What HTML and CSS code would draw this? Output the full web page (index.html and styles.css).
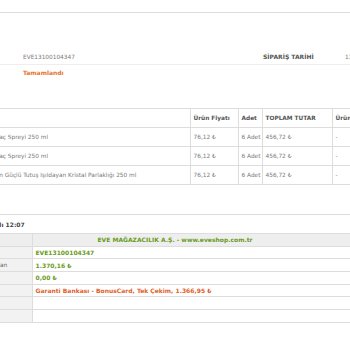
FILE: index.html
```html
<!DOCTYPE html>
<html lang="tr">
<head>
<meta charset="utf-8">
<title>Sipariş Detayı</title>
<link rel="stylesheet" href="styles.css">
</head>
<body>
<div class="page">
  <div class="topbar"></div>

  <div class="info">
    <div class="info-row first">
      <span class="ordno">EVE13100104347</span>
      <span class="info-label">SİPARİŞ TARİHİ</span>
      <span class="info-value">13.10.2013 12:07</span>
    </div>
    <div class="info-row">
      <span class="status">Tamamlandı</span>
    </div>
  </div>

  <table class="items">
    <colgroup>
      <col class="w-name">
      <col class="w-price">
      <col class="w-qty">
      <col class="w-total">
      <col class="w-disc">
    </colgroup>
    <thead>
      <tr>
        <th class="c-name">Ürün Adı</th>
        <th>Ürün Fiyatı</th>
        <th>Adet</th>
        <th>TOPLAM TUTAR</th>
        <th>Ürün İndirimi</th>
      </tr>
    </thead>
    <tbody>
      <tr>
        <td class="c-name">Elnett Satin Saç Spreyi 250 ml</td>
        <td>76,12 ₺</td>
        <td>6 Adet</td>
        <td>456,72 ₺</td>
        <td>-</td>
      </tr>
      <tr>
        <td class="c-name">Elnett Satin Saç Spreyi 250 ml</td>
        <td>76,12 ₺</td>
        <td>6 Adet</td>
        <td>456,72 ₺</td>
        <td>-</td>
      </tr>
      <tr>
        <td class="c-name">Elnett Satin En Güçlü Tutuş Işıldayan Kristal Parlaklığı 250 ml</td>
        <td>76,12 ₺</td>
        <td>6 Adet</td>
        <td>456,72 ₺</td>
        <td>-</td>
      </tr>
    </tbody>
  </table>

  <div class="date"><span class="date-text">Salı 12:07</span></div>

  <table class="summary">
    <colgroup>
      <col class="w-lbl">
      <col class="w-val">
    </colgroup>
    <tr class="head">
      <td class="lbl"></td>
      <td class="head-val">EVE MAĞAZACILIK A.Ş. - www.eveshop.com.tr</td>
    </tr>
    <tr>
      <td class="lbl">Sipariş</td>
      <td class="green">EVE13100104347</td>
    </tr>
    <tr>
      <td class="lbl">Toplam Tutan</td>
      <td class="green">1.370,16 ₺</td>
    </tr>
    <tr>
      <td class="lbl">İndirim</td>
      <td class="green">0,00 ₺</td>
    </tr>
    <tr>
      <td class="lbl">Ödeme</td>
      <td class="orange">Garanti Bankası - BonusCard, Tek Çekim, 1.366,95 ₺</td>
    </tr>
    <tr>
      <td class="lbl"></td>
      <td></td>
    </tr>
    <tr>
      <td class="lbl"></td>
      <td></td>
    </tr>
  </table>
</div>
</body>
</html>
```

FILE: styles.css
```css
html, body {
  margin: 0;
  padding: 0;
  background: #ffffff;
  overflow: hidden;
}

.page {
  width: 350px;
  font-family: "DejaVu Sans", Verdana, sans-serif;
  font-size: 5.8px;
  color: #7a7a7a;
}

.topbar {
  height: 12px;
  border-bottom: 1px solid #dddddd;
}

.info {
  margin-top: 36px;
}

.info-row {
  display: grid;
  grid-template-columns: 240px 82px auto;
  align-items: center;
  padding-left: 23px;
  height: 15px;
  white-space: nowrap;
}

.info-row.first {
  border-bottom: 1px solid #eeeeee;
}

.ordno {
  color: #7a7a7a;
}

.info-label {
  font-weight: bold;
  font-size: 6px;
  color: #555555;
}

.info-value {
  color: #7a7a7a;
}

.status {
  font-weight: bold;
  font-size: 6px;
  color: #e4732c;
}

.items {
  margin-top: 28px;
  margin-left: -43px;
  border-collapse: collapse;
  table-layout: fixed;
  width: 475px;
}

.w-name { width: 233px; }
.w-price { width: 48px; }
.w-qty { width: 24px; }
.w-total { width: 70px; }
.w-disc { width: 100px; }

.items th,
.items td {
  border: 1px solid #dddddd;
  height: 18px;
  padding: 0 3px;
  text-align: left;
  white-space: nowrap;
  overflow: hidden;
  vertical-align: middle;
}

.items th {
  font-weight: bold;
  font-size: 5.8px;
  color: #555555;
}

.items .c-name {
  border-left: none;
}

.date {
  margin-top: 29px;
  border-top: 1px solid #dddddd;
  height: 18px;
  display: flex;
  align-items: center;
  overflow: hidden;
}

.date-text {
  margin-left: -9px;
  font-weight: bold;
  font-size: 6px;
  color: #444444;
  white-space: nowrap;
}

.summary {
  margin-left: -34px;
  border-collapse: collapse;
  table-layout: fixed;
  width: 424px;
}

.w-lbl { width: 66px; }
.w-val { width: 358px; }

.summary td {
  border-top: 1px solid #dddddd;
  border-bottom: 1px solid #dddddd;
  height: 11.7px;
  padding: 0 3px;
  white-space: nowrap;
  overflow: hidden;
  vertical-align: middle;
  font-size: 6px;
  font-weight: bold;
}

.summary td.lbl {
  background: #f2f2f2;
  border-right: 1px solid #dddddd;
  font-weight: normal;
  font-size: 5.8px;
  color: #666666;
}

.summary .head td {
  background: #eeeeee;
}

.summary .head-val {
  padding-left: 65px;
  color: #6a9a22;
}

.green {
  color: #6a9a22;
}

.orange {
  color: #e0602a;
}
```
